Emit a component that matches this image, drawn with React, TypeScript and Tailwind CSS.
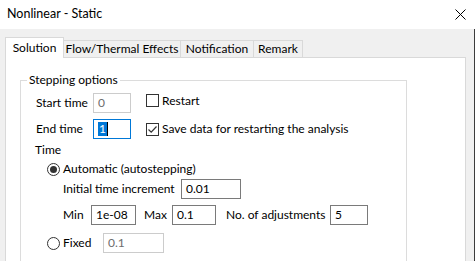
import React from "react";

const FONT = "font-['Lato','Noto_Sans',sans-serif]";

function Field({ value, w, tone = "normal" }: { value: string; w: string; tone?: "normal" | "disabled" | "focus" }) {
  const box =
    tone === "disabled"
      ? "border-[#cccccc] text-[#6d6d6d]"
      : tone === "focus"
      ? "border-[#0078d7] text-black"
      : "border-[#7a7a7a] text-black";
  return (
    <div className={`${w} h-[20px] border ${box} bg-white flex items-center pl-[4px] text-[12px] leading-none shrink-0`}>
      {tone === "focus" ? (
        <span className="flex items-center">
          <span className="bg-[#0078d7] text-white px-[1px] h-[14px] flex items-center">1</span>
          <span className="w-px h-[14px] bg-black" />
        </span>
      ) : (
        value
      )}
    </div>
  );
}

function Check({ checked }: { checked?: boolean }) {
  return (
    <div className="w-[13px] h-[13px] border border-[#333333] bg-white flex items-center justify-center shrink-0">
      {checked && (
        <svg width="11" height="11" viewBox="0 0 11 11">
          <path d="M1.5 5.5 L4.2 8.2 L9.5 2.5" fill="none" stroke="#333333" strokeWidth="1.2" />
        </svg>
      )}
    </div>
  );
}

function Radio({ on }: { on?: boolean }) {
  return (
    <div className="w-[13px] h-[13px] rounded-full border border-[#333333] bg-white flex items-center justify-center shrink-0">
      {on && <div className="w-[7px] h-[7px] rounded-full bg-[#333333]" />}
    </div>
  );
}

const TABS = [
  { label: "Flow/Thermal Effects", w: "w-[117px]" },
  { label: "Notification", w: "w-[73px]" },
  { label: "Remark", w: "w-[49px]" },
];

export default function App() {
  return (
    <div className={`w-[475px] h-[261px] overflow-hidden flex flex-col bg-white text-[12px] text-black whitespace-nowrap ${FONT}`}>
      {/* title bar */}
      <div className="h-[29px] flex items-center justify-between pl-[7px] pr-[9px] shrink-0">
        <span className="text-[12.5px]">Nonlinear - Static</span>
        <svg width="11" height="11" viewBox="0 0 11 11">
          <path d="M0.5 0.5 L10.5 10.5 M10.5 0.5 L0.5 10.5" stroke="#000" strokeWidth="1" />
        </svg>
      </div>

      <div className="flex-1 bg-[#f0f0f0] border-r border-[#3c3c3c] pl-[5px] pr-[8px] pt-[8px] flex flex-col">
        {/* tabs */}
        <div className="flex items-end h-[21px] relative z-10 -mb-px">
          <div className="w-[59px] h-[21px] bg-white border border-b-0 border-[#d9d9d9] flex items-center justify-center pb-[1px]">
            Solution
          </div>
          {TABS.map((t) => (
            <div
              key={t.label}
              className={`${t.w} h-[18px] border border-l-0 border-[#d9d9d9] bg-[#f0f0f0] flex items-center justify-center`}
            >
              {t.label}
            </div>
          ))}
        </div>

        {/* panel */}
        <div className="flex-1 bg-white border border-[#d9d9d9] border-b-0 pl-[14px] pt-[14px]">
          <fieldset className="w-[387px] h-[200px] border border-[#dcdcdc] pl-[15px] pr-2">
            <legend className="-ml-[9px] px-[2px] leading-[16px]">Stepping options</legend>

            <div className="flex flex-col mt-[5px]">
              <div className="flex items-center h-[20px]">
                <span className="w-[57px]">Start time</span>
                <Field value="0" w="w-[38px]" tone="disabled" />
                <div className="ml-[15px] flex items-center gap-[3px] -mt-[5px]">
                  <Check />
                  <span>Restart</span>
                </div>
              </div>

              <div className="flex items-center h-[20px] mt-[6px]">
                <span className="w-[57px]">End time</span>
                <Field value="1" w="w-[38px]" tone="focus" />
                <div className="ml-[15px] flex items-center gap-[3px]">
                  <Check checked />
                  <span>Save data for restarting the analysis</span>
                </div>
              </div>

              <div className="h-[18px] flex items-center mt-[2px] -ml-[1px]">Time</div>

              <div className="flex items-center h-[16px] mt-[2px] pl-[11px] gap-[3px]">
                <Radio on />
                <span>Automatic (autostepping)</span>
              </div>

              <div className="flex flex-col pl-[27px]">
                <div className="flex items-center h-[19px] mt-[2px]">
                  <span className="w-[118px]">Initial time increment</span>
                  <Field value="0.01" w="w-[60px]" />
                </div>

                <div className="flex items-center h-[20px] mt-[7px]">
                  <span className="w-[28px]">Min</span>
                  <Field value="1e-08" w="w-[45px]" />
                  <span className="ml-[8px] w-[28px]">Max</span>
                  <Field value="0.1" w="w-[44px]" />
                  <span className="ml-[10px] w-[104px]">No. of adjustments</span>
                  <Field value="5" w="w-[38px]" />
                </div>
              </div>

              <div className="flex items-center h-[20px] mt-[8px] pl-[11px]">
                <Radio />
                <span className="ml-[3px] w-[40px]">Fixed</span>
                <Field value="0.1" w="w-[61px]" tone="disabled" />
              </div>
            </div>
          </fieldset>
        </div>
      </div>
    </div>
  );
}
